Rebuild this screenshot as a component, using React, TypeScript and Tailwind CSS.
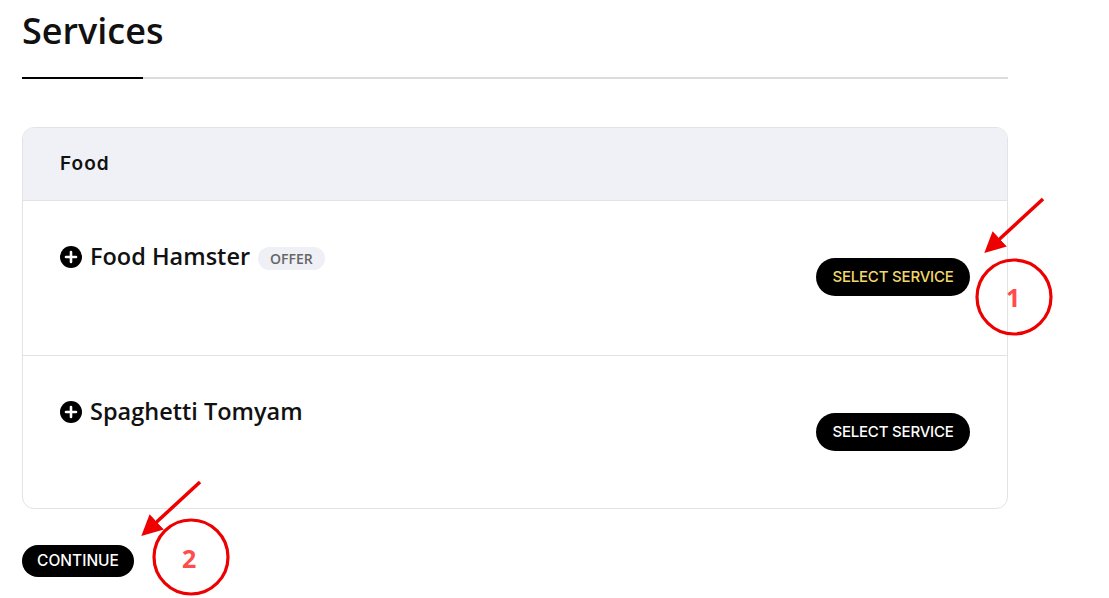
import React from "react";

function PlusIcon() {
  return (
    <svg width="22" height="22" viewBox="0 0 22 22" className="shrink-0">
      <circle cx="11" cy="11" r="11" fill="#000" />
      <path d="M11 6v10M6 11h10" stroke="#fff" strokeWidth="2.6" strokeLinecap="round" />
    </svg>
  );
}

function ServiceRow({ name, offer, hover, last }: { name: string; offer?: boolean; hover?: boolean; last?: boolean }) {
  return (
    <div className={`flex items-start justify-between px-[37px] ${last ? "h-[152px]" : "h-[155px] border-b border-[#e3e3e3]"}`}>
      <div className="flex items-center gap-2 pt-[38px]">
        <PlusIcon />
        <span className="text-[23.5px] font-semibold text-[#111]">{name}</span>
        {offer && (
          <span className="mt-1 rounded-full bg-[#eef0f5] px-3 py-[1px] text-[14px] font-semibold text-[#666]">OFFER</span>
        )}
      </div>
      <button
        className={`mt-[57px] h-[38px] w-[154px] rounded-full bg-black text-[15px] font-medium tracking-[-0.2px] ${hover ? "text-[#f3d86a]" : "text-white"}`}
        style={{ fontFamily: "Inter, sans-serif" }}
      >
        SELECT SERVICE
      </button>
    </div>
  );
}

export default function App() {
  return (
    <div className="relative h-[598px] w-[1109px] bg-white" style={{ fontFamily: '"Open Sans", sans-serif' }}>
      <div className="w-[1008px] pl-[22px] pt-[6px]">
        <h1 className="text-[36px] font-semibold leading-[50px] text-[#111]">Services</h1>
        <div className="mt-[21px] flex items-center">
          <div className="h-[2px] w-[121px] bg-black" />
          <div className="h-[2px] flex-1 bg-[#dcdcdc]" />
        </div>

        <div className="mt-[48px] overflow-hidden rounded-xl border border-[#e3e3e3]">
          <div className="flex h-[73px] items-center border-b border-[#e3e3e3] bg-[#f0f1f6] px-[37px]">
            <span className="text-[19px] font-semibold tracking-[1px] text-[#111]" style={{ fontFamily: "Inter, sans-serif" }}>
              Food
            </span>
          </div>
          <ServiceRow name="Food Hamster" offer hover />
          <ServiceRow name="Spaghetti Tomyam" last />
        </div>

        <button
          className="mt-[36px] h-[32px] w-[112px] rounded-full bg-black text-[15.5px] font-medium text-white"
          style={{ fontFamily: "Inter, sans-serif" }}
        >
          CONTINUE
        </button>
      </div>

      <svg className="pointer-events-none absolute inset-0" width="1109" height="598">
        <defs>
          <marker id="ah" markerWidth="6" markerHeight="6" refX="3" refY="3" orient="auto">
            <path d="M0 0L6 3L0 6z" fill="#e00" />
          </marker>
        </defs>
        <line x1="1043" y1="199" x2="992" y2="246" stroke="#e00" strokeWidth="3.5" markerEnd="url(#ah)" />
        <circle cx="1014" cy="297" r="37" fill="none" stroke="#e00" strokeWidth="3.2" />
        <line x1="200" y1="482" x2="149" y2="529" stroke="#e00" strokeWidth="3.5" markerEnd="url(#ah)" />
        <circle cx="191" cy="557" r="37" fill="none" stroke="#e00" strokeWidth="3.2" />
      </svg>
      <span className="absolute left-[1006px] top-[279px] text-[25px] font-bold text-[#ff4d4d]" style={{ fontFamily: '"Open Sans", sans-serif' }}>1</span>
      <span className="absolute left-[182px] top-[540px] text-[25px] font-bold text-[#ff4d4d]" style={{ fontFamily: '"Open Sans", sans-serif' }}>2</span>
    </div>
  );
}
